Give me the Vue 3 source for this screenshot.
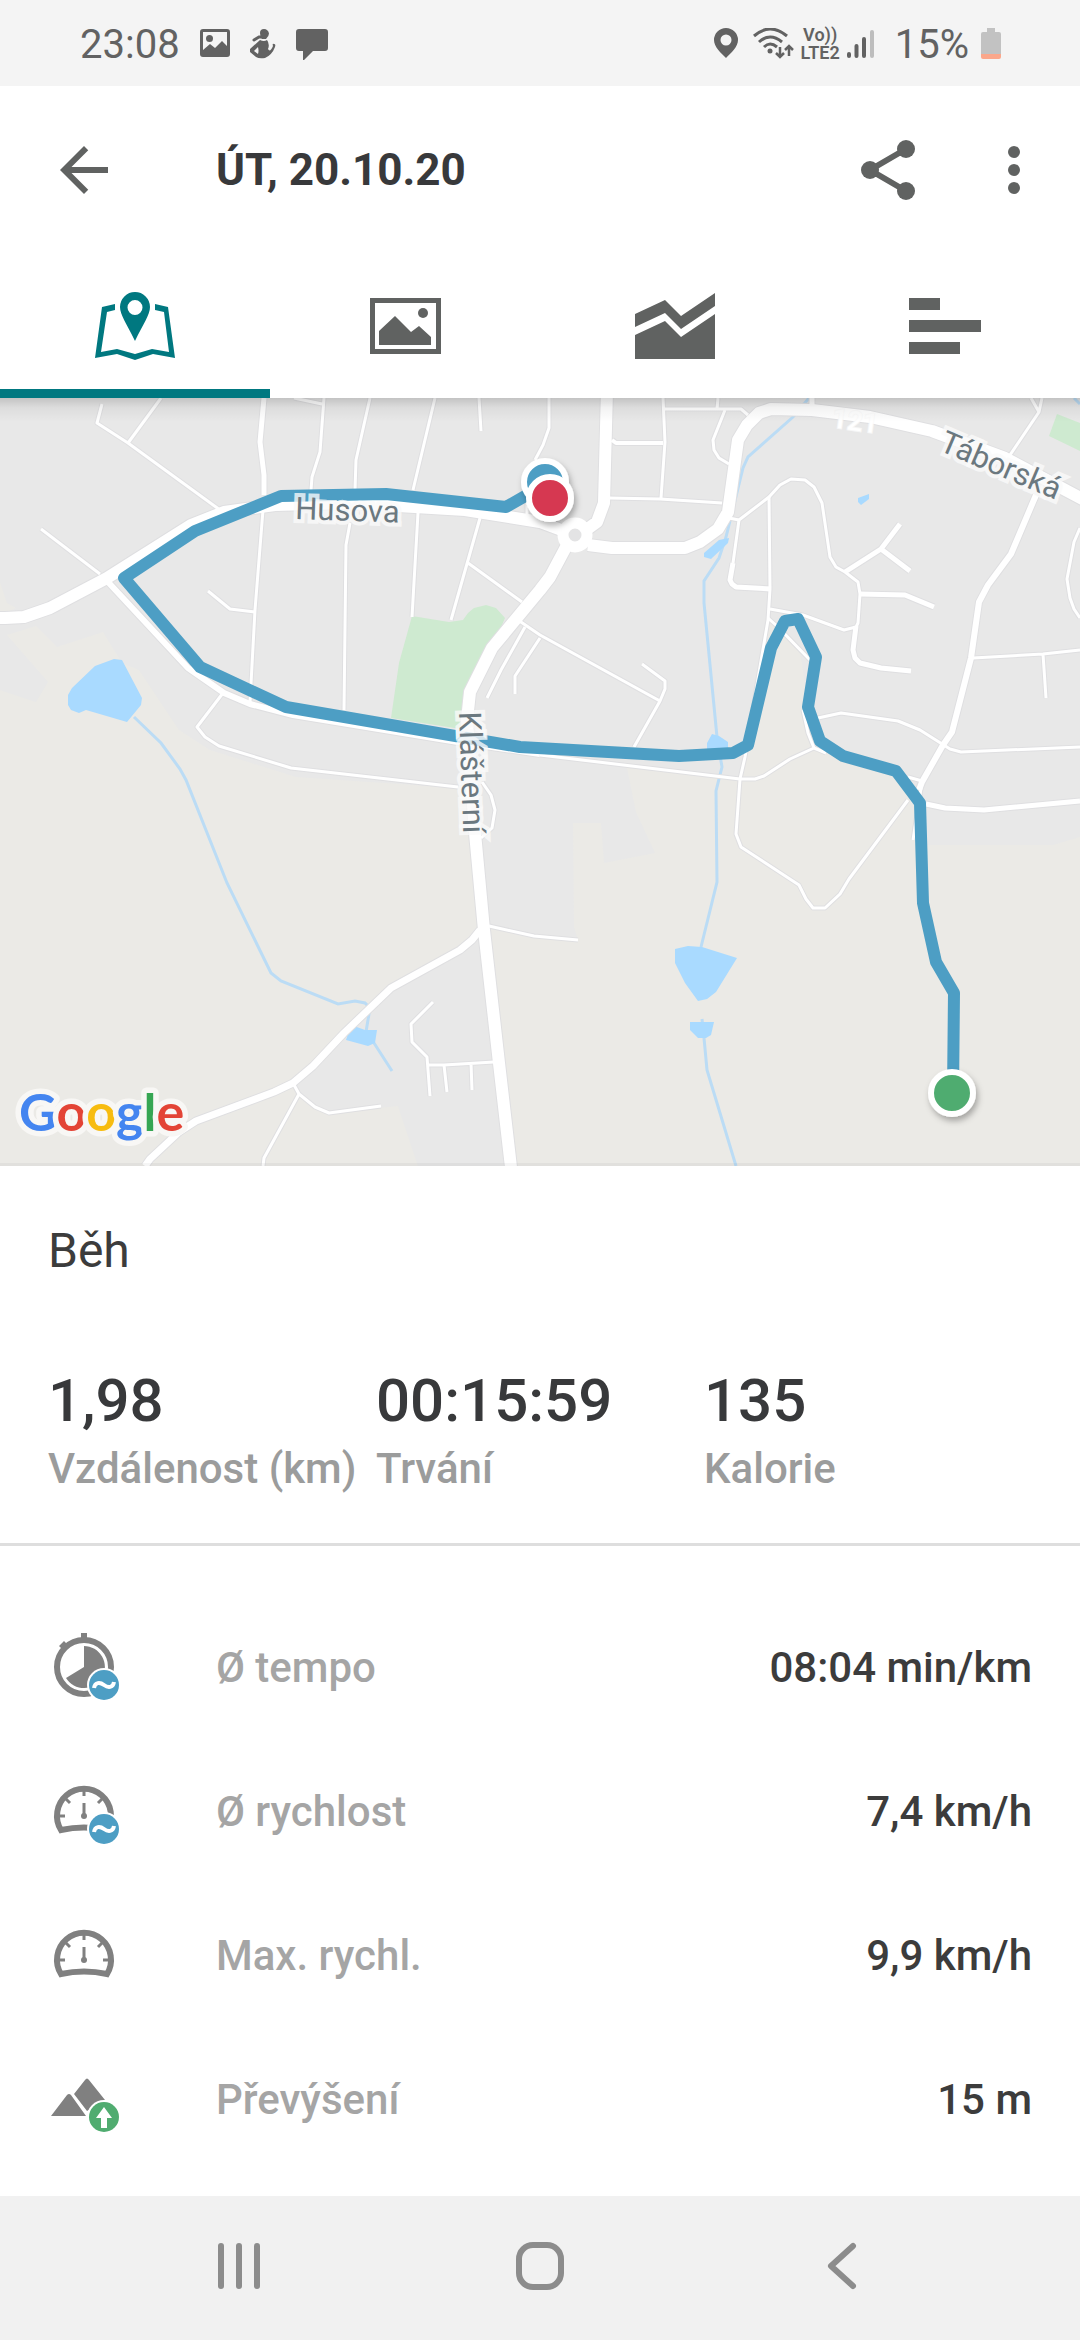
<template>
  <div class="screen">
    <header class="status">
      <div class="status-left">
        <span class="clock">23:08</span>
        <svg width="30" height="32" viewBox="0 0 30 32" fill="#626262">
          <path fill-rule="evenodd" d="M3 1h24a3 3 0 0 1 3 3v22a3 3 0 0 1-3 3H3a3 3 0 0 1-3-3V4a3 3 0 0 1 3-3zM3 4v18l7-6 5 4 7-7 5 5V4z" />
          <circle cx="9.500" cy="10.500" r="3.500" />
        </svg>
        <svg width="26" height="32" viewBox="0 0 26 32" fill="#626262">
          <path d="M10 5Q10 1 14 1t5 4.500Q19 8 16 11h-4Q10 9 10 5z" />
          <path fill-rule="evenodd" d="M10 12q4 2 7 0 3 4 1 9 2 4 5-3-1-3 1-2 2 0 1 3-3 8-10 11-6 1-9-1l-6-5q-1-2 0-3zM8 19l-4 4 4 3q1-3 0-7z" />
          <path d="M4 12l5-3h3" fill="none" stroke="#626262" stroke-width="3" stroke-linecap="round" />
        </svg>
        <svg width="32" height="32" viewBox="0 0 32 32" fill="#626262">
          <path d="M3 1h26a3 3 0 0 1 3 3v16a3 3 0 0 1-3 3H17l-10 10V23H3a3 3 0 0 1-3-3V4a3 3 0 0 1 3-3z" />
        </svg>
      </div>
      <div class="status-right">
        <svg width="24" height="32" viewBox="0 0 24 32" fill="#626262">
          <path fill-rule="evenodd" d="M12 0a12 12 0 0 1 12 12c0 7-7 13-12 18C7 25 0 19 0 12A12 12 0 0 1 12 0zm0 6.500a5.500 5.500 0 1 0 0 11 5.500 5.500 0 0 0 0-11z" />
        </svg>
        <svg class="wifi" width="41" height="32" viewBox="0 0 41 32" fill="none" stroke="#626262" stroke-width="3">
          <path d="M1 8Q17-6 34 8M6 14q11-10 23 0M11 19q6-6 13 0" />
          <circle cx="17" cy="23" r="2.500" fill="#626262" stroke="none" />
          <path d="M27 19v10M23 25l4 4 4-4M36 28V18M32 22l4-4 4 4" stroke-width="2.500" />
        </svg>
        <span class="volte">
          <span>Vo))</span>
          <span>LTE2</span>
        </span>
        <svg width="27" height="32" viewBox="0 0 27 32" stroke-width="4" stroke-linecap="round">
          <path d="M2 26v2M9.500 18v10M17 11v17" stroke="#626262" />
          <path d="M25 4v24" stroke="#bdbdbd" />
        </svg>
        <span class="percent">15%</span>
        <svg width="20" height="32" viewBox="0 0 20 32">
          <path d="M6 0h8v4h4a2 2 0 0 1 2 2v21H0V6a2 2 0 0 1 2-2h4z" fill="#c2c2c2" />
          <path d="M0 26h20v3a2 2 0 0 1-2 2H2a2 2 0 0 1-2-2z" fill="#fba78b" />
        </svg>
      </div>
    </header>

    <div class="appbar">
      <button class="icon-btn" type="button" aria-label="Zpět">
        <svg viewBox="0 0 24 24"><path d="M20 11H7.830l5.590-5.590L12 4l-8 8 8 8 1.410-1.410L7.830 13H20z" /></svg>
      </button>
      <h1>ÚT, 20.10.20</h1>
      <button class="icon-btn" type="button" aria-label="Sdílet">
        <svg viewBox="0 0 24 24">
          <path d="M18 5L6 12l12 7" fill="none" stroke="#606261" stroke-width="2" />
          <circle cx="18" cy="5" r="3" /><circle cx="6" cy="12" r="3" /><circle cx="18" cy="19" r="3" />
        </svg>
      </button>
      <button class="icon-btn more" type="button" aria-label="Více">
        <svg viewBox="0 0 24 24"><circle cx="12" cy="6" r="2" /><circle cx="12" cy="12" r="2" /><circle cx="12" cy="18" r="2" /></svg>
      </button>
    </div>

    <nav class="tabs">
      <button
        v-for="tab in tabs"
        :key="tab.id"
        type="button"
        class="tab"
        :class="{ active: activeTab === tab.id }"
        :aria-label="tab.label"
        @click="activeTab = tab.id"
      >
        <svg width="80" height="72" viewBox="0 0 80 72" fill="currentColor">
          <path v-for="d in tab.paths" :key="d" :d="d" fill-rule="evenodd" />
        </svg>
      </button>
    </nav>

    <div class="map">
      <svg viewBox="0 398 1080 768" role="img" aria-label="Mapa trasy">
        <defs>
          <linearGradient id="topShade" x1="0" y1="0" x2="0" y2="1">
            <stop offset="0" stop-color="#000" stop-opacity=".16" />
            <stop offset=".4" stop-color="#000" stop-opacity=".05" />
            <stop offset="1" stop-color="#000" stop-opacity="0" />
          </linearGradient>
          <filter id="pinShadow" x="-30%" y="-30%" width="170%" height="170%">
            <feDropShadow dx="2" dy="4" stdDeviation="3" flood-opacity=".3" />
          </filter>
        </defs>

        <rect y="398" width="1080" height="768" fill="#e8e8e8" />
        <!-- fields -->
        <g fill="#ebeae6">
          <path d="M0 582L7 603L16 608L0 616z" />
          <path d="M7 635L36 626L57 647L103 632L122 663L139 670L179 730L210 750L296 777L458 788L474 800L484 930L472 940L460 950L391 988L344 1033L293 1083L299 1094L315 1107L329 1113L398 1106L418 1166H0V690L36 702L48 682z" />
          <path d="M578 940L574 927L573 823H601L604 863L655 853L636 812L627 768L740 779L768 620L800 650L808 707L820 741L843 756L896 771L920 803L921 845H1053L1080 837V1166H511L489 926L534 936z" />
        </g>
        <!-- parks -->
        <g fill="#ceead0">
          <path d="M412 616L449 622L463 620L468 613L474 608L486 605L496 608L505 618L492 648L470 692L467 730L391 718L399 663z" />
          <path d="M1057 414L1080 423V451L1049 436z" />
        </g>
        <!-- streams and ponds -->
        <g fill="none" stroke="#bbdcf5" stroke-width="3">
          <path d="M134 717L161 743L180 769L186 780L227 883L271 973L281 981L338 1004L355 1001L365 1003L370 1008L366 1032L374 1043L392 1071" />
          <path d="M809 398L793 417L748 457L743 468L726 537L719 558L704 581V603L717 737L722 767L716 791L717 882L701 947M702 1019L704 1038L707 1070L736 1166" />
          <path d="M1074 398L1080 404" />
        </g>
        <g fill="#a9daff">
          <path d="M95 666L114 659L122 660L142 698L141 705L127 722L86 710L79 713L71 710L68 705V695L72 688z" />
          <path d="M354 1026L365 1030H377L375 1043L368 1046L346 1040L348 1034z" />
          <path d="M729 538L728 543L711 559L704 557V553L719 540zM858 498L869 494V499L861 505L858 502zM712 734L719 736L728 742V752H707V743z" />
          <path d="M675 949L688 946L702 947L737 958L716 992L707 999L698 1001L685 983L675 963zM690 1022H714L711 1035L706 1038H698L690 1030z" />
        </g>

        <!-- roads: a grey casing under each white line -->
        <g class="road casing">
          <path v-for="road in roads" :key="road.d" :d="road.d" :stroke-width="road.w + 2" />
        </g>
        <g class="road">
          <path v-for="road in roads" :key="road.d" :d="road.d" :stroke-width="road.w" />
        </g>
        <circle cx="575" cy="535" r="12" fill="#e3e3e4" stroke="#fff" stroke-width="11" />

        <path class="route" d="M545 482L527 495L506 507L386 494L281 496L195 531L124 578L200 667L286 707L520 747L679 756L733 753L748 745L771 648L785 621L798 619L816 657L808 707L820 741L843 756L896 771L920 803L923 903L936 962L954 993L953 1093" />

        <g class="label">
          <text x="295" y="519" transform="rotate(2 295 519)">Husova</text>
          <text x="459" y="712" transform="rotate(88 459 712)">Klášterní</text>
          <text x="938" y="450" transform="rotate(23 938 450)">Táborská</text>
          <text class="number" x="831" y="427" transform="rotate(8 831 427)">121</text>
        </g>

        <g stroke="#fff" stroke-width="6" filter="url(#pinShadow)">
          <circle cx="545" cy="482" r="21" fill="#4d9ec4" />
          <circle cx="550" cy="498" r="21" fill="#d63951" />
          <circle cx="952" cy="1093" r="21" fill="#50ac70" />
        </g>

        <text class="google" x="19" y="1131"><tspan fill="#4485f0">G</tspan><tspan fill="#e34436">o</tspan><tspan fill="#f7bc10">o</tspan><tspan fill="#4485f0">g</tspan><tspan fill="#36a653">l</tspan><tspan fill="#e34436">e</tspan></text>

        <rect y="398" width="1080" height="24" fill="url(#topShade)" />
        <rect y="1163" width="1080" height="3" fill="#000" opacity=".04" />
      </svg>
    </div>

    <main class="content">
      <h2>Běh</h2>
      <dl class="summary">
        <div v-for="item in summary" :key="item.label">
          <dt>{{ item.label }}</dt>
          <dd>{{ item.value }}</dd>
        </div>
      </dl>

      <dl class="metrics">
        <div v-for="row in metrics" :key="row.label" class="metric">
          <dt>
            <svg width="72" height="72" viewBox="0 0 72 72" fill="#808080">
              <g v-if="row.icon === 'watch'">
                <circle cx="36" cy="36" r="27" fill="none" stroke="#808080" stroke-width="6" />
                <path d="M33 2h6v6h-6zM11 15l5-5 3 3-5 5zM36 36V15A21 21 0 1 1 18 47z" />
              </g>
              <g v-if="row.icon === 'gauge'" fill="none" stroke="#808080" stroke-width="3">
                <path d="M13 55A27 27 0 1 1 59 55Q36 50 13 55z" stroke-width="6" />
                <path d="M36 16v5M11 41h6M55 41h6M18 24l4 4M54 24l-4 4M36 28v13" />
                <circle cx="36" cy="41" r="3" fill="#808080" stroke="none" />
              </g>
              <path v-if="row.icon === 'hills'" d="M3 53L19 32Q21 30 23 32L38 53zM26 31L37 17Q39 14 41 17L57 37L39 48z" />
              <g v-if="row.badge">
                <circle cx="56" cy="54" r="17" fill="#fff" />
                <circle cx="56" cy="54" r="15" :fill="row.badge === 'up' ? '#50ac70' : '#4d9ec4'" />
                <path v-if="row.badge === 'up'" d="M56 44l8 11h-5v10h-6V55h-5z" fill="#fff" />
                <path v-else d="M46 57C47 51 52 51 56 54S65 57 66 51" fill="none" stroke="#fff" stroke-width="4" />
              </g>
            </svg>
            {{ row.label }}
          </dt>
          <dd>{{ row.value }}</dd>
        </div>
      </dl>
    </main>

    <footer class="navbar">
      <button type="button" aria-label="Poslední aplikace">
        <svg width="48" height="48" viewBox="0 0 48 48"><path d="M6 4v40M24 4v40M42 4v40" /></svg>
      </button>
      <button type="button" aria-label="Domů">
        <svg width="48" height="48" viewBox="0 0 48 48"><rect x="3" y="3" width="42" height="42" rx="14" /></svg>
      </button>
      <button type="button" aria-label="Zpět">
        <svg width="48" height="48" viewBox="0 0 48 48"><path d="M36 4L14 24L36 44" /></svg>
      </button>
    </footer>
  </div>
</template>

<script setup>
import { ref } from "vue";

const activeTab = ref("map");

const tabs = [
  {
    id: "map",
    label: "Mapa",
    paths: [
      "M40 2a15 15 0 0 1 15 15c0 8-7 17-15 34C32 34 25 25 25 17A15 15 0 0 1 40 2zm0 8a7.500 7.500 0 1 0 0 15 7.500 7.500 0 0 0 0-15z",
      "M20 14L7 17L0 68L22 64L40 70L58 64L80 68L73 17L60 14V20L69 22L74 62L57 59L40 64L22 59L6 62L12 22L20 20z",
    ],
  },
  {
    id: "photos",
    label: "Fotky",
    paths: [
      "M5 8h71v56H5zM10 13v46h61V13z",
      "M14 41L30 26L46 42L54 36L66 47V55H14z",
      "M58 18a5 5 0 1 1 0 10 5 5 0 0 1 0-10z",
    ],
  },
  {
    id: "charts",
    label: "Grafy",
    paths: [
      "M0 24L30 10L46 26L80 3V16L46 39L30 23L0 37z",
      "M0 45L30 31L46 47L80 24V69H0z",
    ],
  },
  { id: "splits", label: "Úseky", paths: ["M4 8h31v12H4z", "M4 30h72v12H4z", "M4 52h51v12H4z"] },
];

const summary = [
  { label: "Vzdálenost (km)", value: "1,98" },
  { label: "Trvání", value: "00:15:59" },
  { label: "Kalorie", value: "135" },
];

const metrics = [
  { icon: "watch", badge: "avg", label: "Ø tempo", value: "08:04 min/km" },
  { icon: "gauge", badge: "avg", label: "Ø rychlost", value: "7,4 km/h" },
  { icon: "gauge", badge: "", label: "Max. rychl.", value: "9,9 km/h" },
  { icon: "hills", badge: "up", label: "Převýšení", value: "15 m" },
];

const roads = [
  // footpaths and lanes
  { w: 3, d: "M263 510L255 610L250 702M324 398L320 452L312 477L311 490M294 398L322 404M370 398L356 460L355 490M350 523L346 545L344 710" },
  { w: 3, d: "M435 398L413 490M418 513L412 617M479 398L481 431M480 518L451 620M468 563L522 602" },
  { w: 3, d: "M102 404L97 423L128 443L220 510M161 398L128 443M41 529L100 574M208 591L230 609L255 612" },
  { w: 3, d: "M223 693L197 727L205 737L219 746L291 768L458 787M482 782L491 795L495 810L492 828L481 838" },
  { w: 3, d: "M518 620L540 635L660 701M525 627L501 670L487 698M540 638L515 676V694M642 664L665 681V689L660 701L634 747" },
  { w: 3, d: "M549 398V428L543 445L535 460M527 500V518M663 398L665 442L661 498M663 409H741L748 415M718 398L717 409" },
  { w: 3, d: "M725 410L713 440L714 450L719 458L729 464M609 498L660 499L722 503M1031 398L1039 412L1042 398M1039 412L1008 458" },
  { w: 3, d: "M973 658L1043 654L1080 650M1043 654L1046 698M1080 528L1074 542L1067 579L1070 598L1074 609L1080 618" },
  { w: 3, d: "M818 718L841 713L898 721L920 730L950 749L961 752L1080 747M908 777L922 781" },
  { w: 3, d: "M729 518L739 520L769 497L780 485L791 479L805 480L814 487L822 503L830 557L836 567L845 572L858 582L860 594L858 623L856 627L844 630L803 615L770 609M739 520L733 563" },
  { w: 3, d: "M769 497L770 589L768 620L760 667L745 757L740 779L736 834L741 847L799 885L806 899L813 908H825L840 894L849 879L908 800" },
  { w: 3, d: "M768 618L778 627L810 660M803 710L808 733L814 748L826 753M540 755L740 779H755L764 776L790 759L814 748" },
  { w: 3, d: "M489 926L534 936L578 940M433 1002L411 1024L412 1042L427 1057L430 1096M427 1065H444L494 1062M444 1065L447 1092M471 1063L472 1090" },
  { w: 3, d: "M293 1083L299 1094L315 1107L329 1113L381 1106M299 1094L264 1158L263 1166M922 782L913 840" },
  { w: 4, d: "M612 440L616 443H663" },
  // streets
  { w: 5, d: "M264 398L260 442L264 475V495M845 572L881 549L900 524M881 549L910 571M860 594L905 595L934 607M856 626L853 650L855 658L860 663L881 668L911 671" },
  { w: 5, d: "M733 563L730 580L732 584L736 587L771 589M812 398V408M926 804L945 808L984 810L1080 801" },
  { w: 6, d: "M108 582L188 668L224 693L250 704L293 715L458 742L540 754M1036 495L1011 554L988 585L979 602L971 658L952 732L943 745L922 782L919 790" },
  { w: 7, d: "M480 930L472 940L460 950L391 988L344 1033L313 1066L293 1083L274 1092L196 1121L179 1132L150 1159L145 1166" },
  // main roads
  { w: 12, d: "M-10 618H5L24 617L50 608L107 578L191 525L224 512L275 505L348 503L465 510L540 522L564 531" },
  { w: 12, d: "M607 390L604 503L597 522L586 530M588 545L612 548H685L700 542L718 529L728 512L738 440L747 425L759 413L771 409L812 410L870 417L932 431L1005 458L1090 503" },
  { w: 12, d: "M566 547L550 577L540 590L492 648L470 692L467 720L475 833L484 930L499 1063L512 1176" },
];
</script>

<style>
body {
  margin: 0;
  background: #fff;
}
</style>

<style scoped>
.screen {
  min-height: 100vh;
  display: flex;
  flex-direction: column;
  background: #fff;
  color: #3c3c3c;
  font-family: Roboto, "Liberation Sans", sans-serif;
}

button {
  padding: 0;
  border: 0;
  background: none;
  color: inherit;
  cursor: pointer;
}
svg { display: block; flex: none; }
h1, h2, dl, dd { margin: 0; }

.status {
  box-sizing: border-box;
  display: flex;
  justify-content: space-between;
  align-items: center;
  height: 86px;
  padding: 2px 79px 0 80px;
  background: #f4f4f4;
  color: #626262;
  font-size: 40px;
}
.status-left, .status-right {
  display: flex;
  align-items: center;
}
.status-left { gap: 20px; }
.status-right { gap: 7px; }
.wifi { margin-left: 8px; }
.percent { margin: 0 5px 0 14px; }
.volte {
  display: flex;
  flex-direction: column;
  align-items: center;
  font-size: 18px;
  line-height: 18px;
  font-weight: 600;
}

.appbar {
  display: flex;
  align-items: center;
  height: 168px;
  padding: 0 30px 0 48px;
}
.icon-btn svg {
  width: 72px;
  height: 72px;
  fill: #606261;
}
.more { margin-left: 54px; }
h1 {
  flex: 1;
  margin-left: 96px;
  color: #38393b;
  font-size: 44px;
  font-weight: 700;
}

.tabs {
  display: flex;
  height: 144px;
}
.tab {
  flex: 1;
  display: flex;
  align-items: center;
  justify-content: center;
  border-top: 9px solid transparent;
  border-bottom: 9px solid transparent;
  color: #606261;
}
.tab.active {
  border-bottom-color: #007880;
  color: #007880;
}

.map svg {
  width: 100%;
  height: auto;
}
.road {
  fill: none;
  stroke: #fff;
  stroke-linejoin: round;
}
.road.casing { stroke: #dfdfe1; }
.route {
  fill: none;
  stroke: #4d9ec4;
  stroke-width: 12;
  stroke-linejoin: round;
}
.label {
  fill: #6b787f;
  stroke: rgba(250, 250, 250, 0.8);
  stroke-width: 8;
  paint-order: stroke;
  font-size: 31px;
}
.number {
  fill: #fff;
  stroke-width: 2;
  font-size: 27px;
  font-weight: 500;
}
.google {
  font-family: Lato, sans-serif;
  font-size: 52px;
  font-weight: 700;
  stroke: #f8f7f5;
  stroke-width: 11;
  stroke-linejoin: round;
  paint-order: stroke;
}

.content { flex: 1; }
h2 {
  padding: 57px 48px 0;
  font-size: 48px;
  line-height: 56px;
  font-weight: 400;
}
.summary {
  display: grid;
  grid-template-columns: repeat(3, 1fr);
  padding: 84px 48px 44px;
  border-bottom: 3px solid #dedede;
}
.summary div {
  display: flex;
  flex-direction: column-reverse;
}
.summary dt {
  color: #9b9c9c;
  font-size: 42px;
  line-height: 60px;
  font-weight: 500;
  white-space: nowrap;
}
.summary dd {
  color: #38393b;
  font-size: 60px;
  line-height: 76px;
  font-weight: 500;
}

.metrics { padding: 49px 48px 24px; }
.metric {
  display: flex;
  align-items: center;
  justify-content: space-between;
  height: 144px;
  font-size: 42px;
  font-weight: 500;
}
.metric dt {
  display: flex;
  align-items: center;
  gap: 96px;
  color: #a5a5a5;
}

.navbar {
  box-sizing: border-box;
  display: flex;
  height: 144px;
  padding: 0 88px 4px;
  background: #f1f1f1;
}
.navbar button {
  flex: 1;
  display: flex;
  align-items: center;
  justify-content: center;
}
.navbar svg {
  fill: none;
  stroke: #8c8c8c;
  stroke-width: 6;
  stroke-linecap: round;
  stroke-linejoin: round;
}
</style>
